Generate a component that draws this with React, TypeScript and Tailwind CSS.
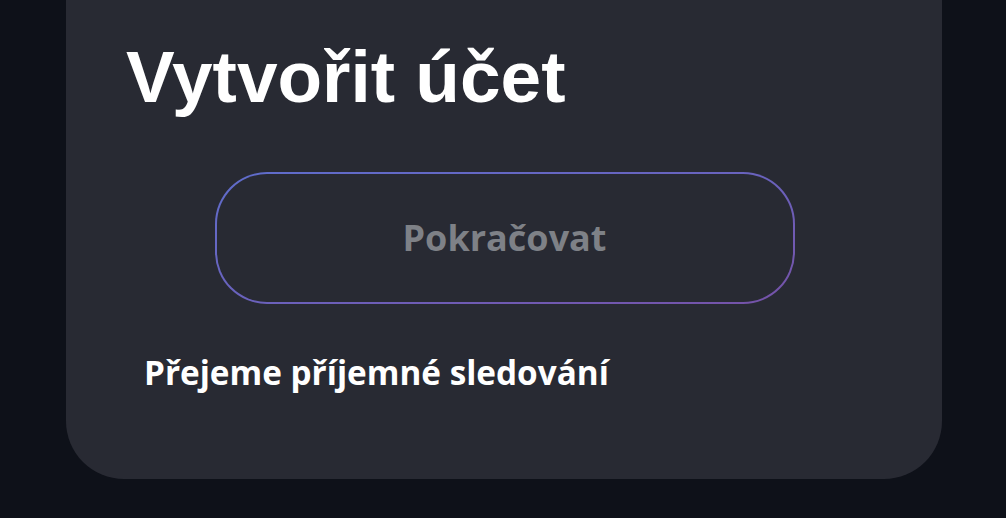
export default function App() {
  return (
    <div className="min-h-[518px] w-full bg-[#0e1119] overflow-hidden">
      <div className="ml-[66px] w-[876px] h-[479px] bg-[#282a33] rounded-b-[58px] flex flex-col">
        {/* heading */}
        <h1 className="pl-[60px] pt-[37px] font-['Liberation_Sans',Arial,sans-serif] font-bold text-[73px] leading-[80px] text-white">
          Vytvořit účet
        </h1>

        {/* continue button with gradient outline */}
        <div className="mt-[55px] self-center ml-[1px] p-[2px] rounded-[52px] bg-gradient-to-br from-[#5f6dcc] via-[#6a62bd] to-[#7552a8]">
          <button className="w-[576px] h-[128px] rounded-[50px] bg-[#282a33] flex items-center justify-center font-['Open_Sans','Noto_Sans',sans-serif] font-bold text-[36px] text-[#7e8187]">
            Pokračovat
          </button>
        </div>

        <p className="pl-[78px] mt-[46px] font-['Open_Sans','Noto_Sans',sans-serif] font-bold text-[33.3px] leading-[44px] text-white">
          Přejeme příjemné sledování
        </p>
      </div>
    </div>
  )
}
